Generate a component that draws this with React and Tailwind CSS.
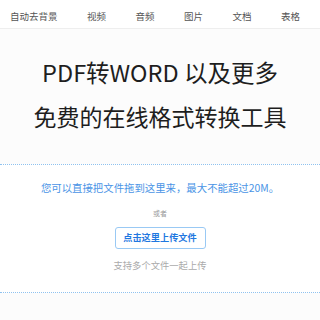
import React from 'react';

const navItems = ['自动去背景', '视频', '音频', '图片', '文档', '表格'];

export default function App() {
  return (
    <div
      className="w-[320px] h-[320px] overflow-hidden bg-[#fcfcfc]"
      style={{ fontFamily: '"Noto Sans CJK SC", "Noto Sans", sans-serif' }}
    >
      <nav className="h-[29px] bg-white border-b border-[#eeeeee] flex items-center pl-[10px] gap-[29.5px] pt-[5px]">
        {navItems.map((item) => (
          <span key={item} className="text-[9.5px] text-[#555555] leading-none">
            {item}
          </span>
        ))}
      </nav>

      <div className="h-[135px] flex flex-col items-center pt-[21px] text-[#1e1e1e]">
        <h1 className="text-[23.5px] leading-[44px] font-normal">PDF转WORD 以及更多</h1>
        <h2 className="text-[23px] leading-[44px] font-normal">免费的在线格式转换工具</h2>
      </div>

      <div className="h-[129px] border-y border-dotted border-[#8fc2ef] bg-white flex flex-col items-center">
        <p className="mt-[16px] text-[10.4px] leading-[14px] text-[#4a94e6]">
          您可以直接把文件拖到这里来，最大不能超过20M。
        </p>
        <p className="mt-[13px] text-[7px] leading-[10px] text-[#999999]">或者</p>
        <button className="mt-[9px] w-[91px] h-[22px] rounded-[3px] border border-[#99c9f4] bg-white text-[9.2px] font-bold text-[#1f78e0]">
          点击这里上传文件
        </button>
        <p className="mt-[10px] text-[9.3px] leading-[12px] text-[#aaaaaa]">支持多个文件一起上传</p>
      </div>
    </div>
  );
}
